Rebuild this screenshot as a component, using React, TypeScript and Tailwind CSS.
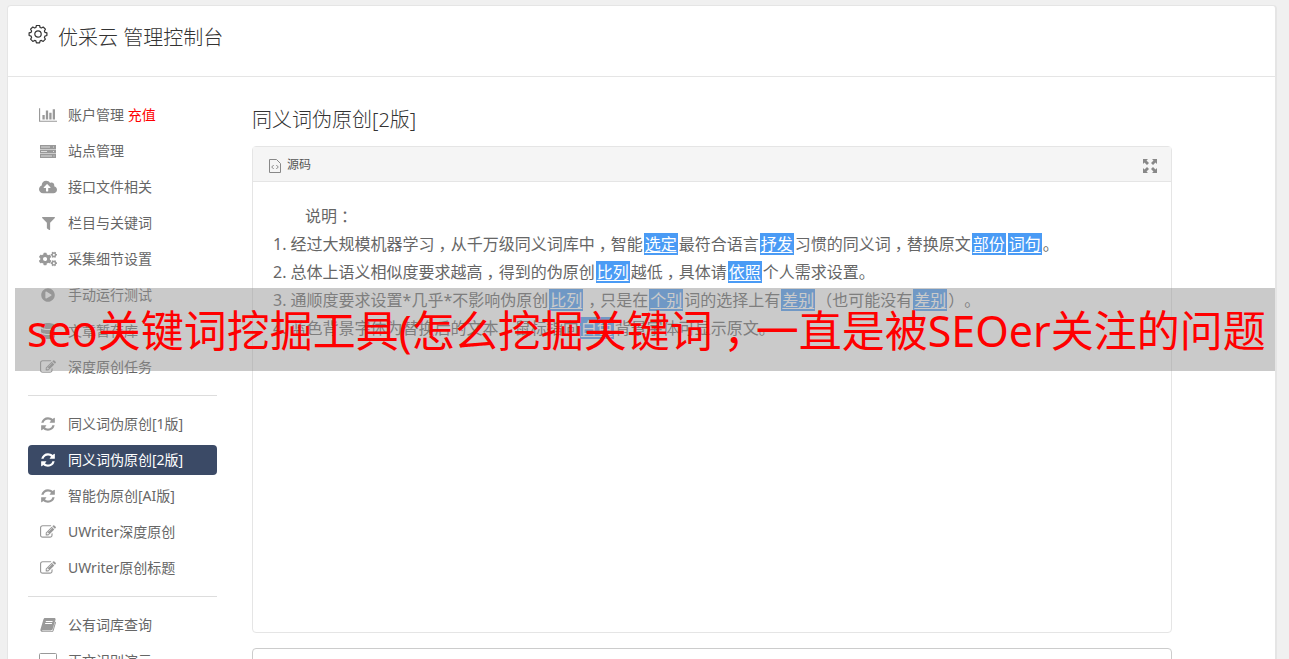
import type { ReactNode } from 'react';
import { FaCloudUploadAlt, FaCogs, FaDatabase, FaFilter, FaPlayCircle } from 'react-icons/fa';

type Item = { label: string; icon: ReactNode; extra?: string; active?: boolean };

function Svg({ box = '0 0 1792 1792', d }: { box?: string; d: string }) {
  return (
    <svg viewBox={box} className="h-4 w-auto" fill="currentColor">
      <path d={d} />
    </svg>
  );
}

const refresh = (
  <Svg d="M1639 1056q0 5-1 7-64 268-268 434.5t-478 166.5q-146 0-282.5-55t-243.5-157l-129 129q-19 19-45 19t-45-19-19-45v-448q0-26 19-45t45-19h448q26 0 45 19t19 45-19 45l-137 137q71 66 161 102t187 36q134 0 250-65t186-179q11-17 53-117 8-23 30-23h192q13 0 22.5 9.5t9.5 22.5zm25-800v448q0 26-19 45t-45 19h-448q-26 0-45-19t-19-45 19-45l138-138q-148-137-349-137-134 0-250 65t-186 179q-11 17-53 117-8 23-30 23h-199q-13 0-22.5-9.5t-9.5-22.5v-7q65-268 270-434.5t480-166.5q146 0 284 55.5t245 156.5l130-129q19-19 45-19t45 19 19 45z" />
);

const edit = (
  <Svg d="M888 1184l116-116-152-152-116 116v56h96v96h56zm440-720q-16-16-33 1l-350 350q-17 17-1 33t33-1l350-350q17-17 1-33zm80 594v190q0 119-84.5 203.5t-203.5 84.5h-832q-119 0-203.5-84.5t-84.5-203.5v-832q0-119 84.5-203.5t203.5-84.5h832q63 0 117 25 15 7 18 23 3 17-9 29l-49 49q-14 14-32 8-23-6-45-6h-832q-66 0-113 47t-47 113v832q0 66 47 113t113 47h832q66 0 113-47t47-113v-126q0-13 9-22l64-64q15-15 35-7t20 29zm-96-738l288 288-672 672h-288v-288zm444 132l-92 92-288-288 92-92q28-28 68-28t68 28l152 152q28 28 28 68t-28 68z" />
);

const chart = (
  <Svg
    box="0 0 2048 1792"
    d="M640 896v512h-256v-512h256zm384-512v1024h-256v-1024h256zm1024 1152v128h-2048v-1536h128v1408h1920zm-640-896v768h-256v-768h256zm384-384v1152h-256v-1152h256z"
  />
);

const server = (
  <svg viewBox="0 0 16 13" className="w-4">
    <path d="M0 0h16v4H0zM0 4.500h16v4H0zM0 9h16v4H0z" fill="currentColor" />
    <path d="M1 2h9M1 6.500h6M1 11h11M13 2h1M13 6.500h1M13.500 11h1" stroke="#ddd" />
  </svg>
);

const book = (
  <svg viewBox="0 0 16 14" className="w-4" fill="currentColor">
    <path
      fillRule="evenodd"
      d="M5 0h9.2c1 0 1.600.7 1.300 1.700L12.700 11c-.3 1-1 1.400-1.900 1.400H2.500c-.8 0-.8.9.2.9h8.700c.7 0 1.100-.3 1.300-1L15.300 3.500c.6.300.8.800.6 1.500l-2.400 7.900c-.3.700-.9 1.100-1.700 1.100H2.400C.9 14 0 12.700.5 11.300L3.400 1.500C3.600.6 4.200 0 5 0zm.9 3l-.2.9h6.700l.3-.9zm-.6 2l-.3.9h6.800l.3-.9z"
    />
  </svg>
);

const monitor = (
  <svg viewBox="0 0 18 16" className="w-[18px] shrink-0" fill="none" stroke="currentColor">
    <rect x="0.5" y="0.5" width="17" height="12" rx="1" />
    <path d="M5 15.500h8" />
  </svg>
);

const groups: Item[][] = [
  [
    { label: '账户管理', icon: chart, extra: '充值' },
    { label: '站点管理', icon: server },
    { label: '接口文件相关', icon: <FaCloudUploadAlt size={18} /> },
    { label: '栏目与关键词', icon: <FaFilter size={13} /> },
    { label: '采集细节设置', icon: <FaCogs size={18} /> },
    { label: '手动运行测试', icon: <FaPlayCircle size={14} /> },
    { label: '文章暂存库', icon: <FaDatabase size={16} /> },
    { label: '深度原创任务', icon: edit },
  ],
  [
    { label: '同义词伪原创[1版]', icon: refresh },
    { label: '同义词伪原创[2版]', icon: refresh, active: true },
    { label: '智能伪原创[AI版]', icon: refresh },
    { label: 'UWriter深度原创', icon: edit },
    { label: 'UWriter原创标题', icon: edit },
  ],
  [
    { label: '公有词库查询', icon: book },
    { label: '正文识别演示', icon: monitor },
  ],
];

// [[word]] is a replaced word
const lines = [
  '1. 经过大规模机器学习，从千万级同义词库中，智能[[选定]]最符合语言[[抒发]]习惯的同义词，替换原文[[部份]][[词句]]。',
  '2. 总体上语义相似度要求越高，得到的伪原创[[比列]]越低，具体请[[依照]]个人需求设置。',
  '3. 通顺度要求设置*几乎*不影响伪原创[[比列]]，只是在[[个别]]词的选择上有[[差别]]（也可能没有[[差别]]）。',
  '4. 蓝色背景字体为替换后的文本，鼠标指向[[白色]]背景字体可显示原文。',
];

// Commas and colons sit in the middle of their cell
function Text({ children }: { children: string }) {
  return children.split(/(\[\[.+?\]\]|[，：])/).map((part, i) => {
    if (part.startsWith('[[')) {
      return (
        <u key={i} className="mx-px bg-[#4a9bf5] px-px text-white underline-offset-2">
          {part.slice(2, -2)}
        </u>
      );
    }
    if (part === '，' || part === '：') {
      return (
        <span key={i} className="-mr-[0.25em] pl-[0.25em]">
          {part}
        </span>
      );
    }
    return part;
  });
}

function Sidebar() {
  return (
    <nav className="w-[189px] shrink-0 divide-y divide-[#ddd] text-sm">
      {groups.map((group, i) => (
        <ul key={i} className="flex flex-col gap-1.5 py-[13px] first:pt-0">
          {group.map((item) => (
            <li key={item.label}>
              <a
                href="#"
                className={`flex h-[30px] items-center gap-2.5 rounded px-2.5 ${
                  item.active ? 'bg-[#3b4a66] text-white' : 'text-[#666]'
                }`}
              >
                <span className={`flex w-5 justify-center ${item.active ? 'text-white' : 'text-[#999]'}`}>
                  {item.icon}
                </span>
                <span>
                  {item.label}
                  {item.extra && <span className="text-[#f00]"> {item.extra}</span>}
                </span>
              </a>
            </li>
          ))}
        </ul>
      ))}
    </nav>
  );
}

export default function App() {
  return (
    <div className="relative h-screen overflow-hidden bg-[#f0f0f0] pt-[5px] pr-3 pl-[7px] font-['Noto_Sans','Noto_Sans_CJK_SC',sans-serif] [text-spacing-trim:space-all]">
      <div className="min-h-screen rounded-t border border-r-2 border-[#e5e5e5] bg-white">
        <header className="flex h-[71px] items-start gap-2.5 border-b border-[#e5e5e5] px-5 pt-[18px] text-[#333]">
          <svg viewBox="0 0 20 20" className="size-5" fill="none" stroke="currentColor">
            <path
              strokeWidth="1.200"
              strokeLinejoin="round"
              d="M8.400 1.500h3.200l.5 2 1.300.5 1.800-1 2.200 2.200-1 1.800.5 1.300 2 .5v2.700l-2 .6-.5 1.300 1 1.800-2.200 2.200-1.800-1-1.300.5-.5 2H8.400l-.5-2-1.300-.5-1.800 1-2.200-2.200 1-1.800-.5-1.300-2-.6V8.800l2-.5.5-1.300-1-1.800L4.800 3l1.800 1 1.300-.5z"
            />
            <circle cx="10" cy="10" r="3.200" strokeWidth="1.200" />
          </svg>
          <h1 className="text-xl leading-7 font-light">优采云 管理控制台</h1>
        </header>

        <div className="flex gap-[35px] pt-[23px] pr-[103px] pl-5">
          <Sidebar />
          <main className="min-w-0 flex-1">
            <h2 className="pt-1.5 text-xl leading-7 font-light text-[#333]">同义词伪原创[2版]</h2>

            <section className="mt-3 h-[487px] rounded border border-[#e5e5e5]">
              <div className="flex h-[35px] items-center justify-between border-b border-[#e5e5e5] bg-[#f5f5f5] pr-3.5 pl-4 text-xs text-[#555]">
                <span className="flex items-end gap-1.5 pt-0.5">
                  <svg viewBox="0 0 12 14" className="h-3.5 w-3" fill="none" stroke="#888">
                    <path d="M.5.5h7l4 4v9H.5z" />
                    <path d="M4.700 6L2.700 8l2 2M7.300 6l2 2-2 2" />
                  </svg>
                  源码
                </span>
                <button type="button" aria-label="全屏" className="pt-1 text-[#888]">
                  <svg viewBox="0 0 14 14" className="size-3.5" fill="currentColor">
                    <path d="M0 0h5L3.500 1.500l2.500 2.500-2 2L1.500 3.500 0 5zM14 0v5l-1.500-1.500L10 6 8 4l2.500-2.500L9 0zM0 14V9l1.500 1.500L4 8l2 2-2.500 2.500L5 14zM14 14H9l1.500-1.500L8 10l2-2 2.500 2.500L14 9z" />
                  </svg>
                </button>
              </div>

              <div className="px-5 pt-5 text-base leading-7 text-[#666]">
                <p className="indent-8">
                  <Text>说明：</Text>
                </p>
                {lines.map((line) => (
                  <p key={line}>
                    <Text>{line}</Text>
                  </p>
                ))}
              </div>
            </section>

            <section className="mt-[15px] h-40 rounded border border-[#ccc]" />
          </main>
        </div>
      </div>

      <div className="absolute top-[288px] right-3.5 left-[15px] h-[83px] overflow-hidden bg-[#969696]/50 px-3 pt-[13px] text-[43px] leading-[59px] whitespace-nowrap text-[#f00]">
        <Text>seo关键词挖掘工具(怎么挖掘关键词，一直是被SEOer关注的问题</Text>
      </div>
    </div>
  );
}
